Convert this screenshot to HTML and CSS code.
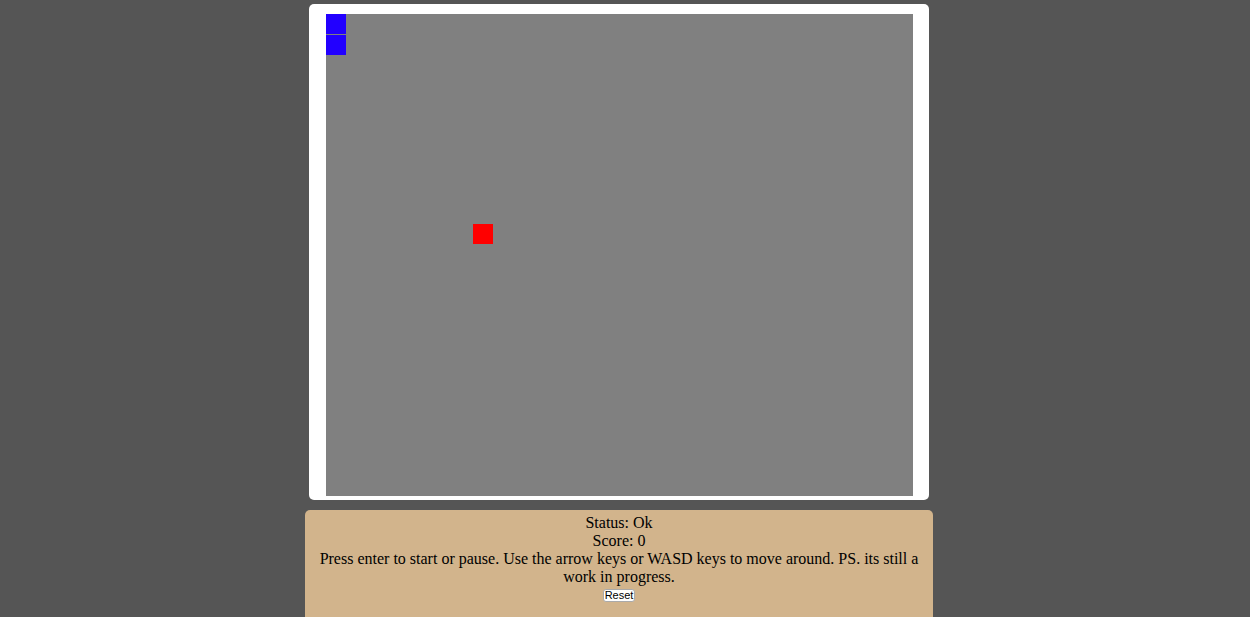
FILE: index.html
```html
<!DOCTYPE html>
<html>
<head>
<meta charset="utf-8">
<title>Snake</title>
<link rel="stylesheet" href="styles.css">
</head>
<body>
<div class="page">
  <div class="board">
    <div class="canvas">
      <div class="cell snake" style="left:0px;top:0px"></div>
      <div class="cell snake" style="left:0px;top:21px"></div>
      <div class="cell food" style="left:147px;top:210px"></div>
    </div>
  </div>
  <div class="panel">
    <div class="line">Status: Ok</div>
    <div class="line">Score: 0</div>
    <div class="line">Press enter to start or pause. Use the arrow keys or WASD keys to move around. PS. its still a work in progress.</div>
    <button class="reset">Reset</button>
  </div>
</div>
</body>
</html>
```
FILE: styles.css
```css
html, body {
  margin: 0;
  padding: 0;
  background: #555555;
  overflow: hidden;
}
.page {
  width: 1238px;
  display: flex;
  flex-direction: column;
  align-items: center;
  padding-top: 4px;
  font-family: "Liberation Serif", "Times New Roman", serif;
  font-size: 16px;
  color: #000;
}
.board {
  background: #ffffff;
  border-radius: 5px;
  padding: 10px 16px 4px 17px;
}
.canvas {
  position: relative;
  width: 587px;
  height: 482px;
  background: #808080;
}
.cell {
  position: absolute;
  width: 20px;
  height: 20px;
}
.snake { background: #2200ff; }
.food { background: #ff0000; }
.panel {
  margin-top: 10px;
  width: 628px;
  box-sizing: border-box;
  background: #d2b48c;
  border-radius: 5px;
  padding: 4px 12px 30px;
  text-align: center;
  line-height: 18px;
}
.reset {
  display: block;
  margin: 3px auto 0;
  height: 13px;
  box-sizing: border-box;
  font-family: "Liberation Sans", Arial, sans-serif;
  font-size: 11px;
  line-height: 11px;
  background: #ffffff;
  border: 1px solid #aaa;
  border-radius: 3px;
  padding: 0 1px;
  color: #000;
}
```
